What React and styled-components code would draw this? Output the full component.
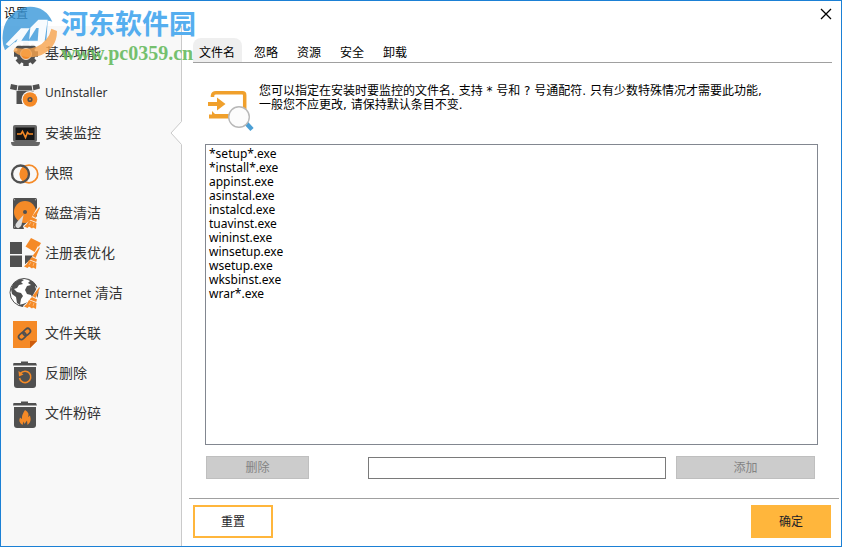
import { useState } from "react";
import styled, { createGlobalStyle } from "styled-components";

const GlobalStyle = createGlobalStyle`
    * {
        box-sizing: border-box;
    }
    body {
        margin: 0;
        background: #ffffff;
        font-family: "Noto Sans", "Noto Sans CJK SC", sans-serif;
        font-size: 12px;
        color: #000000;
    }
    button, input, select {
        font: inherit;
        margin: 0;
    }
`

const Window = styled.div`
    position: relative;
    min-height: 100vh;
    display: flex;
    flex-direction: column;
    border: 1px solid #1b80d5;
    background: #ffffff;
`
const TitleBar = styled.header`
    height: 25px;
    padding: 0 9px 0 3px;
    display: flex;
    align-items: center;
    justify-content: space-between;
`
const Title = styled.h1`
    margin: 0;
    font-size: 12px;
    line-height: 24px;
    font-weight: 400;
`
const CloseButton = styled.button`
    width: 12px;
    height: 12px;
    padding: 0;
    border: 0;
    background: none;
    display: flex;
`
const Body = styled.div`
    flex: 1;
    display: flex;
`
const Sidebar = styled.nav`
    width: 181px;
    flex-shrink: 0;
    padding-top: 7px;
    background: #f8f8f8;
    border-right: 1px solid #cacaca;
`
const MenuItem = styled.button`
    position: relative;
    width: 100%;
    height: 40px;
    padding: 0 0 0 8px;
    display: flex;
    align-items: center;
    gap: 4px;
    border: 0;
    background: none;
    color: #333333;
    text-align: left;
`
const MenuText = styled.span`
    font-size: ${(props) => (props.$latin ? "12px" : "14px")};
    line-height: 20px;
`
const Latin = styled.span`
    font-size: 12px;
`
const Arrow = styled.svg`
    position: absolute;
    right: -1px;
    top: 8px;
`
const Main = styled.main`
    flex: 1;
    min-width: 0;
    display: flex;
    flex-direction: column;
`
const Tabs = styled.div`
    margin: 12px 9px 0 11px;
    height: 25px;
    display: flex;
    gap: 6px;
    border-bottom: 1px solid #a0a0a0;
`
const Tab = styled.button`
    height: 24px;
    padding: 6px 7px 0 6px;
    border: 0;
    border-radius: 8px 8px 0 0;
    background: ${(props) => (props.$active ? "#efefef" : "none")};
    color: #000000;
    line-height: 18px;
    white-space: nowrap;
`
const Content = styled.section`
    flex: 1;
    padding: 20px 23px 19px;
    display: flex;
    flex-direction: column;
`
const Intro = styled.div`
    height: 61px;
    padding-left: 3px;
    display: flex;
    gap: 4px;
`
const IntroText = styled.p`
    margin: 0;
    padding-top: 1px;
    font-family: "DejaVu Sans", "Noto Sans CJK SC", sans-serif;
    line-height: 14px;
`
const FileList = styled.select`
    flex: 1;
    width: 100%;
    padding: 0;
    border: 1px solid #828790;
    border-radius: 0;
    background: #ffffff;
    outline: none;
    overflow: hidden;
`
const FileOption = styled.option`
    height: 14px;
    min-height: 14px;
    padding: 0 3px;
    line-height: 14px;
    color: #000000;
`
const EditRow = styled.form`
    margin: 11px 3px 0 1px;
    display: flex;
    align-items: flex-end;
`
const GrayButton = styled.button`
    width: ${(props) => props.$width};
    height: 23px;
    padding: 0;
    border: 1px solid #bfbfbf;
    background: #cccccc;
    color: #838383;
    line-height: 22px;
`
const NameInput = styled.input`
    flex: 1;
    min-width: 0;
    height: 22px;
    margin: 0 10px 0 59px;
    padding: 0 4px;
    border: 1px solid #7a7a7a;
    background: #ffffff;
    outline: none;
`
const Footer = styled.footer`
    margin: 0 2px 0 7px;
    padding: 6px 8px 8px 4px;
    display: flex;
    align-items: flex-start;
    justify-content: space-between;
    border-top: 1px solid #a0a0a0;
`
const ActionButton = styled.button`
    width: 80px;
    height: 33px;
    padding: 0;
    border: 2px solid #ffb63c;
    background: ${(props) => (props.$primary ? "#ffb63c" : "#ffffff")};
    color: #1e1e28;
    line-height: 28px;
`
const Watermark = styled.div`
    position: absolute;
    left: 0;
    top: 4px;
    display: flex;
    gap: 1px;
    pointer-events: none;
`
const WatermarkText = styled.div`
    padding-top: 2px;
    white-space: nowrap;
`
const SiteName = styled.div`
    font-family: "Noto Sans CJK SC", sans-serif;
    font-size: 27px;
    line-height: 32px;
    font-weight: 700;
    color: #55aeef;
`
const SiteUrl = styled.div`
    font-family: "Liberation Serif", serif;
    font-size: 20px;
    line-height: 28px;
    font-weight: 700;
    color: #67bb60;
    opacity: 0.9;
`

const gray = "#505050"
const orange = "#f58a27"

const Icon = ({ children }) => (
    <svg width="32" height="32" viewBox="0 0 32 32" aria-hidden="true">{children}</svg>
)

const Broom = () => (
    <g>
        <path d="M30 10L27 19L30 22L28 32H15L14 29L22 22L24 18L29 9Z" fill="#f8f8f8" />
        <path d="M31 10.500L26.500 21L23.500 19L30 10.500Z" fill={orange} />
        <path d="M23 20L28 22.500L27.200 25L20.500 22.500Z" fill={orange} />
        <path d="M20 23L27.500 26L27 32L24 30.500L23 31.500L20 29.500L18.500 31L15 29.500Q18.500 27 20 23Z" fill={orange} />
        <path d="M20 28L22 25M24 29L25 26" stroke="#fbd3a8" strokeWidth=".6" />
    </g>
)

const GearIcon = () => (
    <Icon>
        <g stroke={gray} strokeWidth="5.500">
            <path d="M17 5V29M5 17H29M8.500 8.500L25.500 25.500M25.500 8.500L8.500 25.500" />
        </g>
        <circle cx="17" cy="17" r="9.500" fill={gray} />
        <circle cx="17" cy="17" r="5.500" fill={orange} stroke="#e6d9cc" strokeWidth="1" />
    </Icon>
)
const UninstallerIcon = () => (
    <Icon>
        <path d="M2 7L9.500 8.500H22.500L30 7L31 11.500L24 13.500H8L1 12Z" fill={gray} />
        <path d="M9 8L8 14M23 8L24 14" stroke="#f8f8f8" strokeWidth="1" />
        <path d="M7.500 14H24.500V27H7.500Z" fill={gray} />
        <circle cx="21" cy="22.500" r="8.500" fill="#f8f8f8" />
        <circle cx="21" cy="22.500" r="7.300" fill={orange} />
        <circle cx="21" cy="22.500" r="1.800" fill="none" stroke={gray} strokeWidth="1.600" />
    </Icon>
)
const MonitorIcon = () => (
    <Icon>
        <rect x="4" y="8" width="24" height="17" rx="2" fill="#666" />
        <rect x="6.500" y="10.500" width="19" height="12.500" fill="#161616" />
        <path d="M2 25H31Q31 29 28 29H5Q2 29 2 25Z" fill="#666" />
        <path d="M8 17H12L13.500 14.500L16.500 20.500L18.500 15.500L20 17H24" fill="none" stroke={orange} strokeWidth="1.600" />
    </Icon>
)
const SnapshotIcon = () => (
    <Icon>
        <circle cx="20" cy="17" r="8.800" fill="none" stroke={orange} strokeWidth="1.700" />
        <path d="M16 9.300A8.700 8.700 0 0 1 16 24.700A8.700 8.700 0 0 1 16 9.300Z" fill={orange} />
        <circle cx="11.500" cy="17" r="8.500" fill="none" stroke={gray} strokeWidth="2.300" />
    </Icon>
)
const DiskIcon = () => (
    <Icon>
        <rect x="4" y="1" width="24" height="31" rx="1.500" fill={gray} />
        <circle cx="16" cy="15" r="11" fill={orange} />
        <circle cx="16" cy="15" r="2" fill={gray} />
        <path d="M14.500 18L12.500 28Q10 33 7 30Q5.500 28 8.500 24.500Z" fill="#dedede" />
        <g fill="#aaa"><circle cx="5.500" cy="2.800" r=".7" /><circle cx="26.500" cy="2.800" r=".7" /><circle cx="5.500" cy="30" r=".7" /></g>
        <Broom />
    </Icon>
)
const RegistryIcon = () => (
    <Icon>
        <path d="M1 5H13V17H1ZM1 18.500H13V30H1ZM16 18.500H27V30H16Z" fill={gray} />
        <path d="M22 1L32 6L26.500 15.500L16.500 9.500Z" fill={orange} />
        <Broom />
    </Icon>
)
const GlobeIcon = () => (
    <Icon>
        <circle cx="15" cy="15.500" r="14" fill="#fff" stroke={gray} strokeWidth="1" />
        <path d="M2 12Q4 4 12 2L15 3L12 5L14 7L10 8L8 11L5 12L8 15L12 16L14 19L12 22L11 28L8 26L7 20L3 17Z" fill={gray} />
        <path d="M17 2Q25 3 28 10L26 9L28 15L27 20L24 22L22 18L18 17L16 13L18 9L22 8L19 6L21 4Z" fill={gray} />
        <path d="M9 28Q16 32 22 28L19 25L14 27Z" fill={gray} />
        <Broom />
    </Icon>
)
const LinkIcon = () => (
    <Icon>
        <path d="M4 4H28V24L21 31H4Z" fill={orange} />
        <path d="M21 31V24H28Z" fill="#cc5c0d" />
        <g transform="rotate(-42 15.500 17)" fill="none" stroke={gray} strokeWidth="1.700">
            <rect x="8.500" y="14.300" width="8" height="5.400" rx="2.700" />
            <rect x="14.500" y="14.300" width="8" height="5.400" rx="2.700" />
        </g>
    </Icon>
)
const Bin = () => (
    <g fill={gray}>
        <path d="M4.500 6H12V4.500H19V6H27L28 8.500H4Z" />
        <path d="M5 10H27V28Q27 31 24 31H8Q5 31 5 28Z" />
    </g>
)
const UndeleteIcon = () => (
    <Icon>
        <Bin />
        <path d="M11.500 16.500A5.700 5.700 0 1 1 10.500 21" fill="none" stroke={orange} strokeWidth="1.600" />
        <path d="M9.500 14L10 19.500L14.500 17.500Z" fill={orange} />
    </Icon>
)
const ShredderIcon = () => (
    <Icon>
        <Bin />
        <path d="M16 13Q21 16 19 20L21 18.500Q23 25 18.500 28L18 23.500L15.500 27L14.500 24.500L13.500 28Q9 25 11 20.500L13 22Q12.500 18 16 13Z" fill={orange} />
    </Icon>
)

const menu = [
    { id: "basic", icon: GearIcon, text: "基本功能" },
    { id: "uninstaller", icon: UninstallerIcon, text: "UnInstaller", latin: true },
    { id: "monitor", icon: MonitorIcon, text: "安装监控" },
    { id: "snapshot", icon: SnapshotIcon, text: "快照" },
    { id: "disk", icon: DiskIcon, text: "磁盘清洁" },
    { id: "registry", icon: RegistryIcon, text: "注册表优化" },
    { id: "internet", icon: GlobeIcon, text: <><Latin>Internet</Latin> 清洁</> },
    { id: "assoc", icon: LinkIcon, text: "文件关联" },
    { id: "undelete", icon: UndeleteIcon, text: "反删除" },
    { id: "shredder", icon: ShredderIcon, text: "文件粉碎" },
]

const tabs = ["文件名", "忽略", "资源", "安全", "卸载"]

const defaultFiles = [
    "*setup*.exe",
    "*install*.exe",
    "appinst.exe",
    "asinstal.exe",
    "instalcd.exe",
    "tuavinst.exe",
    "wininst.exe",
    "winsetup.exe",
    "wsetup.exe",
    "wksbinst.exe",
    "wrar*.exe",
]

const SearchFileIcon = () => (
    <svg width="47" height="50" viewBox="0 0 47 50" aria-hidden="true">
        <path d="M4.500 14V12.500Q5 9.800 8 9.800H34.500Q36.700 9.800 36.700 12V30" fill="none" stroke="#f0a02c" strokeWidth="3.500" />
        <path d="M0 19H9V14.500L17.500 21L9 27.500V23H0Z" fill="#f0a02c" />
        <path d="M4 28L7 31H24V35.500H1V31.500H4Z" fill="#f0a02c" />
        <path d="M38 40L44 46.500" stroke="#4b9fd5" strokeWidth="4.500" />
        <circle cx="31" cy="34" r="10.300" fill="#fcfcfc" stroke="#b8b8b8" strokeWidth="1.400" />
    </svg>
)

const SiteLogo = () => (
    <svg width="59" height="66" viewBox="0 0 177 198" aria-hidden="true">
        <path d="M5 92Q8 30 65 8Q128 -5 154 50Q147 47 140 47L136 110L40 112L12 136Q3 116 5 92Z" fill="#3d9ada" opacity=".82" />
        <path d="M14 118L60 70H86L61 107H84L88 68L112 44H140L131 107H151V122H40L50 101L24 124Z" fill="#fff" opacity=".95" />
        <path d="M82 107L106 69H113L110 107Z" fill="#3d9ada" opacity=".82" />
        <path d="M151 71L168 78Q168 135 110 154Q67 164 37 139L42 128Q80 136 107 125Q143 108 151 71Z" fill="#f6a34c" opacity=".8" />
    </svg>
)

const App = () => {
    const [page, setPage] = useState("monitor")
    const [tab, setTab] = useState("文件名")
    const [files, setFiles] = useState(defaultFiles)
    const [name, setName] = useState("")

    const addFile = (e) => {
        e.preventDefault()
        if (!name) return
        setFiles([...files, name])
        setName("")
    }

    return (
        <>
            <GlobalStyle />
            <Window>
                <TitleBar>
                    <Title>设置</Title>
                    <CloseButton aria-label="关闭">
                        <svg width="12" height="12" viewBox="0 0 12 12"><path d="M1 1L11 11M11 1L1 11" stroke="#000" strokeWidth="1.300" /></svg>
                    </CloseButton>
                </TitleBar>
                <Body>
                    <Sidebar>
                        {menu.map(({ id, icon: MenuIcon, text, latin }) => (
                            <MenuItem key={id} onClick={() => setPage(id)}>
                                <MenuIcon />
                                <MenuText $latin={latin}>{text}</MenuText>
                                {page === id && (
                                    <Arrow width="12" height="24" viewBox="0 0 12 24">
                                        <path d="M12 0L1 12L12 24Z" fill="#fff" />
                                        <path d="M11.500 .5L1 12L11.500 23.500" fill="none" stroke="#cacaca" />
                                    </Arrow>
                                )}
                            </MenuItem>
                        ))}
                    </Sidebar>
                    <Main>
                        <Tabs role="tablist">
                            {tabs.map((item) => (
                                <Tab key={item} role="tab" aria-selected={tab === item} $active={tab === item} onClick={() => setTab(item)}>{item}</Tab>
                            ))}
                        </Tabs>
                        <Content>
                            <Intro>
                                <SearchFileIcon />
                                <IntroText>
                                    您可以指定在安装时要监控的文件名. 支持 * 号和 ? 号通配符. 只有少数特殊情况才需要此功能,<br />
                                    一般您不应更改, 请保持默认条目不变.
                                </IntroText>
                            </Intro>
                            <FileList multiple aria-label="文件名">
                                {files.map((file) => <FileOption key={file}>{file}</FileOption>)}
                            </FileList>
                            <EditRow onSubmit={addFile}>
                                <GrayButton type="button" $width="103px">删除</GrayButton>
                                <NameInput aria-label="新文件名" value={name} onChange={(e) => setName(e.target.value)} />
                                <GrayButton type="submit" $width="139px">添加</GrayButton>
                            </EditRow>
                        </Content>
                        <Footer>
                            <ActionButton>重置</ActionButton>
                            <ActionButton $primary>确定</ActionButton>
                        </Footer>
                    </Main>
                </Body>
                <Watermark>
                    <SiteLogo />
                    <WatermarkText>
                        <SiteName>河东软件园</SiteName>
                        <SiteUrl>www.pc0359.cn</SiteUrl>
                    </WatermarkText>
                </Watermark>
            </Window>
        </>
    )
}

export default App
